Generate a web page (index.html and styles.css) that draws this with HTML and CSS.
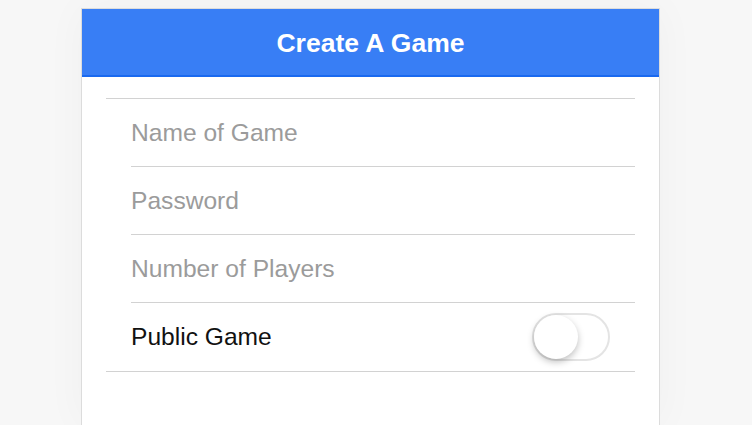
FILE: index.html
```html
<!DOCTYPE html>
<html>
<head>
<meta charset="utf-8">
<link rel="stylesheet" href="styles.css">
</head>
<body>
<div class="panel">
  <div class="bar"><h1 class="title">Create A Game</h1></div>
  <div class="content">
    <div class="list">
      <div class="row"><div class="inner placeholder">Name of Game</div></div>
      <div class="row"><div class="inner placeholder">Password</div></div>
      <div class="row"><div class="inner placeholder">Number of Players</div></div>
      <div class="row"><div class="inner last">
        <span class="label">Public Game</span>
        <span class="toggle"><span class="knob"></span></span>
      </div></div>
    </div>
  </div>
</div>
</body>
</html>
```

FILE: styles.css
```css
html, body {
  margin: 0;
  padding: 0;
  height: 100%;
  overflow: hidden;
}
body {
  background: #f7f7f7;
  font-family: "Liberation Sans", Arial, sans-serif;
}
.panel {
  margin: 8px 0 0 81px;
  width: 577px;
  height: calc(100vh - 9px);
  background: #fff;
  border: 1px solid #dcdcdc;
  border-bottom: none;
  box-shadow: 0 0 40px rgba(0, 0, 0, 0.035);
}
.bar {
  height: 68px;
  padding-top: 2px;
  box-sizing: border-box;
  background: #387ef5;
  border-bottom: 2px solid #1a69ef;
  display: flex;
  align-items: center;
  justify-content: center;
}
.title {
  margin: 0;
  color: #fff;
  font-size: 26.5px;
  font-weight: bold;
}
.content {
  padding: 21px 24px 0 24px;
}
.list {
  border-top: 1px solid #d2d2d2;
  border-bottom: 1px solid #d2d2d2;
}
.row {
  padding-left: 25px;
}
.inner {
  height: 67px;
  border-bottom: 1px solid #d2d2d2;
  display: flex;
  align-items: center;
  font-size: 24.6px;
}
.inner.last {
  border-bottom: none;
  height: 68px;
  justify-content: space-between;
  padding-right: 25px;
}
.placeholder {
  color: #9b9b9b;
}
.label {
  color: #111;
}
.toggle {
  position: relative;
  width: 74px;
  height: 44px;
  border: 2px solid #e4e4e4;
  border-radius: 24px;
  background: #fff;
}
.knob {
  position: absolute;
  left: 0;
  top: 0;
  width: 44px;
  height: 44px;
  border-radius: 50%;
  background: #fff;
  box-shadow: 0 3px 7px rgba(0, 0, 0, 0.25);
}
```
